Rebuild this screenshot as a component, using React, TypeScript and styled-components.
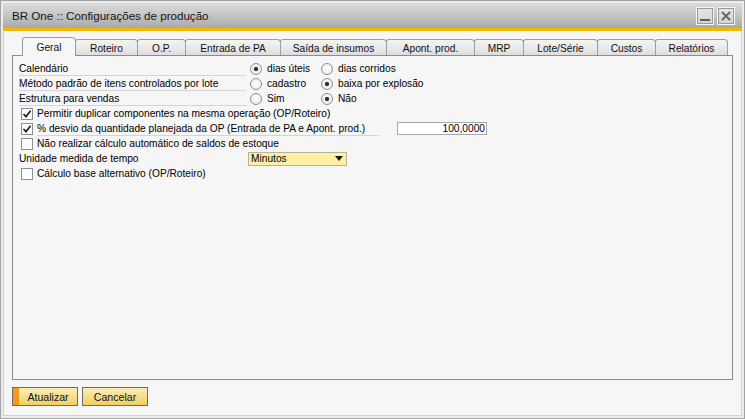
import React from 'react'
import styled, { createGlobalStyle } from 'styled-components'

const GlobalStyle = createGlobalStyle`
  html, body {
    margin: 0;
    padding: 0;
    background: #ffffff;
  }
`

const Window = styled.div`
  width: 745px;
  height: 419px;
  box-sizing: border-box;
  border: 1px solid #a3a3a3;
  background: #ececec;
  padding: 0 2px 2px;
  display: flex;
  flex-direction: column;
  font-family: "Liberation Sans", Arial, sans-serif;
  font-size: 10.2px;
  color: #000;
`

const TitleBar = styled.div`
  margin-top: 2px;
  height: 25px;
  flex: none;
  display: flex;
  align-items: center;
  justify-content: space-between;
  padding: 0 7px 0 9px;
  background: linear-gradient(#dcdcdc, #c4c4c4 50%, #a9a9a9);
  border-bottom: 3px solid #f5b800;
`

const Title = styled.span`
  font-size: 11.6px;
  color: #151515;
`

const WinButtons = styled.div`
  display: flex;
  gap: 3px;
`

const WinButton = styled.div`
  width: 18px;
  height: 18px;
  box-sizing: border-box;
  border: 1px solid #f6f6f6;
  outline: 1px solid #9a9a9a;
  outline-offset: -2px;
  background: linear-gradient(#e6e6e6, #d2d2d2);
  display: flex;
  align-items: center;
  justify-content: center;
`

const Body = styled.div`
  flex: 1;
  display: flex;
  flex-direction: column;
  background: #f6f6f6;
  border: 1px solid #d2d2d2;
  border-top: none;
  padding: 6px 8px 0;
`

const TabStrip = styled.div`
  height: 18px;
  display: flex;
  align-items: flex-end;
  padding-left: 10px;
`

const Tab = styled.div<{ $w: number; $active?: boolean }>`
  position: relative;
  width: ${p => p.$w + 1}px;
  margin-right: -1px;
  height: ${p => (p.$active ? 19 : 16)}px;
  margin-bottom: ${p => (p.$active ? -1 : 0)}px;
  z-index: ${p => (p.$active ? 2 : 1)};
  box-sizing: border-box;
  border: 1px solid #9c9c9c;
  border-bottom: none;
  border-radius: 3px 4px 0 0;
  background: ${p => (p.$active ? '#f6f6f6' : 'linear-gradient(#f4f4f4, #dedede)')};
  display: flex;
  align-items: center;
  justify-content: center;
  padding-top: ${p => (p.$active ? 0 : 1)}px;
  color: #111;
`

const Panel = styled.div`
  height: 325px;
  box-sizing: border-box;
  border: 1px solid #8c8c8c;
  background: #f6f6f6;
  padding: 5px 6px;
  display: flex;
  flex-direction: column;
`

const Row = styled.div`
  height: 15px;
  display: flex;
  align-items: center;
`

const FieldLabel = styled.div<{ $w: number; $line?: boolean }>`
  width: ${p => p.$w}px;
  height: 15px;
  box-sizing: border-box;
  display: flex;
  align-items: center;
  border-bottom: 1px solid ${p => (p.$line ? '#d4d4d4' : 'transparent')};
  flex: none;
`

const RadioGroup = styled.div`
  display: flex;
  margin-left: 4px;
`

const RadioOption = styled.label`
  width: 71px;
  display: flex;
  align-items: center;
  gap: 5px;
  white-space: nowrap;
`

const RadioCircle = styled.span<{ $on?: boolean }>`
  width: 12px;
  height: 12px;
  box-sizing: border-box;
  border-radius: 50%;
  border: 1px solid #8d8f90;
  background: radial-gradient(circle at 50% 40%, #ffffff, #e7e7e7);
  display: flex;
  align-items: center;
  justify-content: center;
  flex: none;

  &::after {
    content: '';
    width: 4px;
    height: 4px;
    border-radius: 50%;
    background: #2e2e2e;
    box-shadow: 0 0 1px #555;
    display: ${p => (p.$on ? 'block' : 'none')};
  }
`

const CheckRow = styled(Row)`
  padding-left: 2px;
  gap: 4px;
`

const CheckBox = styled.span`
  width: 12px;
  height: 12px;
  box-sizing: border-box;
  border: 1px solid #8d8f90;
  background: #fdfdfd;
  display: flex;
  align-items: center;
  justify-content: center;
  flex: none;
`

const NumberInput = styled.div`
  margin-left: 14px;
  width: 90px;
  height: 13px;
  box-sizing: border-box;
  border: 1px solid #a8a8a8;
  background: #fff;
  display: flex;
  align-items: center;
  justify-content: flex-end;
  padding-right: 1px;
`

const Select = styled.div`
  width: 99px;
  height: 14px;
  box-sizing: border-box;
  border: 1px solid #b9b09a;
  background: #fff0a6;
  display: flex;
  align-items: center;
  justify-content: space-between;
  padding: 0 3px 0 2px;
`

const Footer = styled.div`
  flex: none;
  padding-top: 7px;
  display: flex;
  gap: 4px;
`

const Button = styled.div<{ $primary?: boolean }>`
  width: 66px;
  height: 19px;
  box-sizing: border-box;
  border: 1px solid #6c6c6c;
  background: linear-gradient(#fcedbb, #f6dc8a 55%, #f1cf5e);
  display: flex;
  align-items: center;
  justify-content: center;
  padding-left: ${p => (p.$primary ? 6 : 0)}px;
  font-size: 10.6px;
  color: #111;
  box-shadow: ${p => (p.$primary ? 'inset 6px 0 0 #f29a1c' : 'none')};
`

const Check = () => (
  <svg width="10" height="10" viewBox="0 0 10 10">
    <path d="M1.5 5 L4 7.6 L8.6 1.8" fill="none" stroke="#222" strokeWidth="1.7" />
  </svg>
)

const tabs: [string, number][] = [
  ['Geral', 53],
  ['Roteiro', 62],
  ['O.P.', 48],
  ['Entrada de PA', 95],
  ['Saída de insumos', 106],
  ['Apont. prod.', 88],
  ['MRP', 49],
  ['Lote/Série', 74],
  ['Custos', 58],
  ['Relatórios', 72],
]

const radioRows: { label: string; options: [string, boolean][] }[] = [
  { label: 'Calendário', options: [['dias úteis', true], ['dias corridos', false]] },
  {
    label: 'Método padrão de itens controlados por lote',
    options: [['cadastro', false], ['baixa por explosão', true]],
  },
  { label: 'Estrutura para vendas', options: [['Sim', false], ['Não', true]] },
]

export default function App() {
  return (
    <>
      <GlobalStyle />
      <Window>
        <TitleBar>
          <Title>BR One :: Configurações de produção</Title>
          <WinButtons>
            <WinButton>
              <svg width="12" height="12" viewBox="0 0 12 12">
                <rect x="1" y="9" width="10" height="2" fill="#5f5f5f" />
              </svg>
            </WinButton>
            <WinButton>
              <svg width="10" height="10" viewBox="0 0 10 10">
                <path d="M1 1 L9 9 M9 1 L1 9" stroke="#686868" strokeWidth="2" />
              </svg>
            </WinButton>
          </WinButtons>
        </TitleBar>
        <Body>
          <TabStrip>
            {tabs.map(([name, w], i) => (
              <Tab key={name} $w={w} $active={i === 0}>
                {name}
              </Tab>
            ))}
          </TabStrip>
          <Panel>
            {radioRows.map(r => (
              <Row key={r.label}>
                <FieldLabel $w={227} $line>
                  {r.label}
                </FieldLabel>
                <RadioGroup>
                  {r.options.map(([text, on]) => (
                    <RadioOption key={text}>
                      <RadioCircle $on={on} />
                      {text}
                    </RadioOption>
                  ))}
                </RadioGroup>
              </Row>
            ))}
            <CheckRow>
              <CheckBox>
                <Check />
              </CheckBox>
              Permitir duplicar componentes na mesma operação (OP/Roteiro)
            </CheckRow>
            <CheckRow>
              <CheckBox>
                <Check />
              </CheckBox>
              <FieldLabel $w={342} $line>
                % desvio da quantidade planejada da OP (Entrada de PA e Apont. prod.)
              </FieldLabel>
              <NumberInput>100,0000</NumberInput>
            </CheckRow>
            <CheckRow>
              <CheckBox />
              Não realizar cálculo automático de saldos de estoque
            </CheckRow>
            <Row>
              <FieldLabel $w={229}>Unidade medida de tempo</FieldLabel>
              <Select>
                Minutos
                <svg width="8" height="5" viewBox="0 0 8 5">
                  <path d="M0 0 H8 L4 5 Z" fill="#1a1a1a" />
                </svg>
              </Select>
            </Row>
            <CheckRow>
              <CheckBox />
              Cálculo base alternativo (OP/Roteiro)
            </CheckRow>
          </Panel>
          <Footer>
            <Button $primary>Atualizar</Button>
            <Button>Cancelar</Button>
          </Footer>
        </Body>
      </Window>
    </>
  )
}
